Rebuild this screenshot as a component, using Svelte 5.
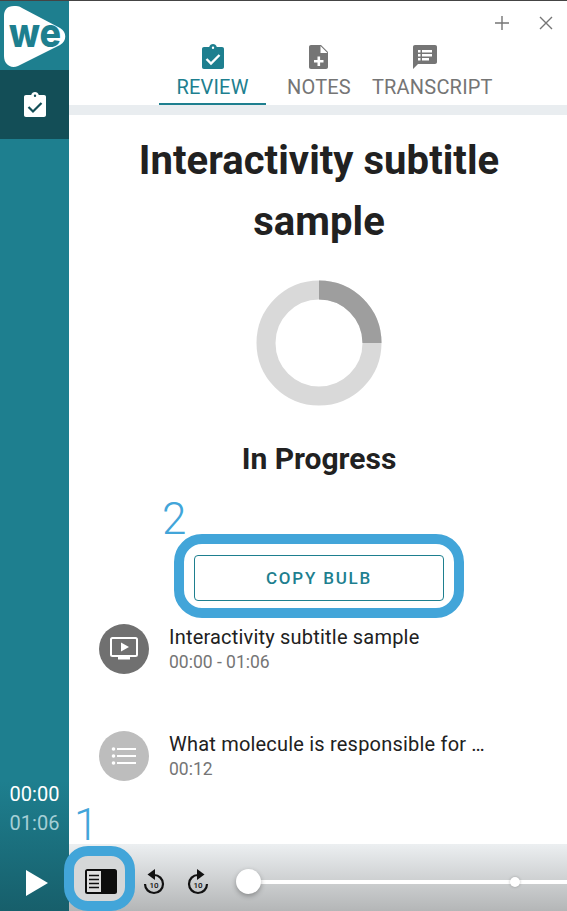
<script>
	const items = [
		{ title: 'Interactivity subtitle sample', time: '00:00 - 01:06', kind: 'video' },
		{ title: 'What molecule is responsible for …', time: '00:12', kind: 'lines' }
	];
</script>

<div class="app">
	<aside class="sidebar">
		<div class="logo">
			<svg width="69" height="69" viewBox="0 0 69 69">
				<path d="M14 5 C7 5 4 9 4 15 L4 55 C4 63 10 68 18 65 L60 44 C67 40 67 31 60 27 L22 7 C19 5 17 5 14 5Z" fill="#fff" />
				<text x="9" y="46" class="logo-text" textLength="52" lengthAdjust="spacingAndGlyphs">we</text>
			</svg>
		</div>
		<div class="active-item">
			<svg width="24" height="26" viewBox="0 0 24 26">
				<path fill="#fff" fill-rule="evenodd" d="M3 3h5.200C8.700 1.300 10.200 0 12 0s3.300 1.300 3.800 3H21c1.300 0 2 .8 2 2v18c0 1.300-.8 2-2 2H3c-1.300 0-2-.8-2-2V5c0-1.300.8-2 2-2zm9-.5a1.200 1.200 0 1 0 0 2.400 1.200 1.200 0 0 0 0-2.400z" />
				<path fill="none" stroke="#134e57" stroke-width="2.200" d="M5.500 15l4.500 4.500 8.500-8.500" />
			</svg>
		</div>
		<div class="spacer"></div>
		<div class="times">
			<span class="now">00:00</span>
			<span class="total">01:06</span>
		</div>
		<div class="play">
			<svg width="24" height="28" viewBox="0 0 24 28"><path d="M1 1l22 13L1 27z" fill="#fff" /></svg>
		</div>
	</aside>

	<div class="main">
		<div class="window-actions">
			<svg width="14" height="14" viewBox="0 0 14 14"><path d="M7 0v14M0 7h14" stroke="#757575" stroke-width="1.400" /></svg>
			<svg width="14" height="14" viewBox="0 0 14 14"><path d="M1 1l12 12M13 1L1 13" stroke="#757575" stroke-width="1.400" /></svg>
		</div>

		<nav class="tabs">
			<div class="tab active">
				<svg width="24" height="26" viewBox="0 0 24 26">
					<path fill="#1e7f8f" fill-rule="evenodd" d="M3 3h5.200C8.700 1.300 10.200 0 12 0s3.300 1.300 3.800 3H21c1.300 0 2 .8 2 2v18c0 1.300-.8 2-2 2H3c-1.300 0-2-.8-2-2V5c0-1.300.8-2 2-2zm9-.5a1.200 1.200 0 1 0 0 2.400 1.200 1.200 0 0 0 0-2.400z" />
					<path fill="none" stroke="#fff" stroke-width="2.400" d="M5.500 15l4.500 4.500 8.500-8.500" />
				</svg>
				<span>REVIEW</span>
			</div>
			<div class="tab">
				<svg width="24" height="26" viewBox="0 0 24 26">
					<path fill="#757575" d="M4 1h10l7 7v15c0 1.200-.8 2-2 2H4c-1.200 0-2-.8-2-2V3c0-1.200.8-2 2-2z" />
					<path fill="#fff" d="M13.500 2v7h7zM10.500 12.500h2.600v3.400h3.400v2.600h-3.400v3.400h-2.600v-3.400H7v-2.600h3.500z" />
				</svg>
				<span>NOTES</span>
			</div>
			<div class="tab">
				<svg class="transcript-icon" width="26" height="26" viewBox="0 0 26 26">
					<path fill="#757575" d="M3 1h20c1.300 0 2 .8 2 2v15c0 1.300-.8 2-2 2H6l-5 5V3c0-1.300.8-2 2-2z" />
					<path fill="#fff" d="M6 6h2.500v2.500H6zM10 6h10v2.500H10zM6 10h2.500v2.500H6zM10 10h10v2.500H10zM6 14h2.500v2.500H6zM10 14h7v2.500H10z" />
				</svg>
				<span>TRANSCRIPT</span>
			</div>
		</nav>
		<div class="divider"></div>

		<section class="content">
			<h1>Interactivity subtitle sample</h1>

			<svg class="donut" width="126" height="126" viewBox="0 0 126 126">
				<circle cx="63" cy="63" r="53" fill="none" stroke="#d9d9d9" stroke-width="19" />
				<path d="M63 10 A53 53 0 0 1 116 63" fill="none" stroke="#9e9e9e" stroke-width="19" />
			</svg>

			<h2>In Progress</h2>

			<button class="copy">COPY BULB</button>

			<ul class="list">
				{#each items as item}
					<li>
						<div class="bullet {item.kind}">
							{#if item.kind === 'video'}
								<svg width="30" height="26" viewBox="0 0 30 26">
									<rect x="2" y="2" width="26" height="18" rx="1.500" fill="none" stroke="#fff" stroke-width="2" />
									<path d="M12 6.500l8 4.500-8 4.500zM9 21h12v2.500H9z" fill="#fff" />
								</svg>
							{:else}
								<svg width="26" height="20" viewBox="0 0 26 20">
									<path d="M6 3h19M6 10h19M6 17h19" stroke="#fff" stroke-width="2" />
									<circle cx="2.500" cy="3" r="1.800" fill="#fff" />
									<circle cx="2.500" cy="10" r="1.800" fill="#fff" />
									<circle cx="2.500" cy="17" r="1.800" fill="#fff" />
								</svg>
							{/if}
						</div>
						<div class="info">
							<div class="item-title">{item.title}</div>
							<div class="item-time">{item.time}</div>
						</div>
					</li>
				{/each}
			</ul>
		</section>

		<footer class="controls">
			<div class="panel-btn">
				<svg width="32" height="25" viewBox="0 0 32 25">
					<rect width="32" height="25" rx="2.500" fill="#0d0d0d" />
					<rect x="2" y="2" width="14" height="21" fill="#ddd" />
					<path d="M4 6.500h10M4 10.500h10M4 14.500h10M4 18.500h10" stroke="#0d0d0d" stroke-width="1.600" />
				</svg>
			</div>
			<div class="skip">
				<svg width="22" height="26" viewBox="0 0 22 26">
					<path d="M11 6a9 9 0 1 1-9 9" fill="none" stroke="#111" stroke-width="2.200" />
					<path d="M12 0v11L4.500 5.500z" fill="#111" />
					<text x="11" y="19" class="skip-text">10</text>
				</svg>
				<svg width="22" height="26" viewBox="0 0 22 26">
					<path d="M11 6a9 9 0 1 0 9 9" fill="none" stroke="#111" stroke-width="2.200" />
					<path d="M10 0v11l7.500-5.500z" fill="#111" />
					<text x="11" y="19" class="skip-text">10</text>
				</svg>
			</div>
			<div class="track">
				<span class="thumb"></span>
				<span class="marker"></span>
			</div>
		</footer>

		<div class="ring ring-panel"></div>
		<span class="note note-one">1</span>
		<div class="ring ring-copy"></div>
		<span class="note note-two">2</span>
	</div>
</div>

<style>
	:global(body) {
		margin: 0;
		background: #fff;
	}

	.app {
		display: flex;
		width: 567px;
		height: 911px;
		box-sizing: border-box;
		border-top: 1px solid #444;
		overflow: hidden;
		font-family: Roboto, sans-serif;
		color: #212121;
	}

	.sidebar {
		display: flex;
		flex-direction: column;
		flex: 0 0 69px;
		background: linear-gradient(#1e7f8f 0, #1e7f8f 780px, #175f6b 910px);
	}

	.logo {
		height: 69px;
	}

	.logo svg {
		display: block;
	}

	.logo-text {
		font-family: Inter, sans-serif;
		font-weight: 800;
		font-size: 40px;
		fill: #1e7f8f;
	}

	.active-item {
		display: flex;
		align-items: center;
		justify-content: center;
		height: 69px;
		background: #134e57;
	}

	.spacer {
		flex: 1;
	}

	.times {
		display: flex;
		flex-direction: column;
		align-items: center;
		gap: 8px;
		margin-bottom: 20px;
		font-size: 20px;
		line-height: 21px;
	}

	.now {
		color: #fff;
	}

	.total {
		color: #a5cfd6;
	}

	.play {
		display: flex;
		align-items: center;
		justify-content: center;
		height: 57px;
		padding-left: 4px;
		box-sizing: border-box;
	}

	.main {
		position: relative;
		display: flex;
		flex-direction: column;
		flex: 1;
		min-width: 0;
	}

	.window-actions {
		display: flex;
		justify-content: flex-end;
		gap: 30px;
		height: 15px;
		padding: 15px 14px 0 0;
	}

	.tabs {
		display: flex;
		height: 74px;
		padding-left: 90px;
		gap: 21px;
	}

	.tab {
		display: flex;
		flex-direction: column;
		align-items: center;
		justify-content: flex-end;
		gap: 5px;
		box-sizing: border-box;
		height: 74px;
		color: #757575;
		font-size: 20px;
		line-height: 24px;
		letter-spacing: 0.2px;
		padding-bottom: 6px;
	}

	.tab.active {
		width: 107px;
		color: #1e7f8f;
		border-bottom: 2px solid #1e7f8f;
		padding-bottom: 4px;
	}

	.transcript-icon {
		margin-right: 14px;
	}

	.divider {
		flex: 0 0 10px;
		background: #e9edf0;
	}

	.content {
		display: flex;
		flex: 1;
		flex-direction: column;
		align-items: center;
		min-height: 0;
	}

	h1 {
		width: 400px;
		margin: 15px 0 0 2px;
		font-size: 40px;
		line-height: 61px;
		letter-spacing: 0.05px;
		font-weight: 700;
		text-align: center;
		color: #212121;
	}

	.donut {
		display: block;
		flex: none;
		margin: 28px 0 0 2px;
	}

	h2 {
		margin: 33px 0 0 2px;
		font-size: 30px;
		line-height: 40px;
		font-weight: 700;
	}

	.copy {
		flex: none;
		width: 250px;
		height: 46px;
		margin: 76px 0 0 2px;
		background: #fff;
		border: 1px solid #1e7f8f;
		border-radius: 4px;
		color: #1e7f8f;
		font-family: inherit;
		font-size: 17px;
		font-weight: 500;
		letter-spacing: 1.800px;
	}

	.list {
		align-self: stretch;
		margin: 23px 0 0;
		padding: 0 0 0 30px;
		list-style: none;
	}

	.list li {
		display: flex;
		gap: 20px;
		height: 107px;
	}

	.bullet {
		display: flex;
		flex: 0 0 50px;
		align-items: center;
		justify-content: center;
		height: 50px;
		border-radius: 50%;
	}

	.bullet.video {
		background: #707070;
	}

	.bullet.lines {
		background: #bdbdbd;
	}

	.info {
		padding-top: 1px;
	}

	.item-title {
		font-size: 20px;
		line-height: 24px;
		letter-spacing: 0.2px;
		color: #212121;
	}

	.item-time {
		margin-top: 1px;
		font-size: 17.500px;
		line-height: 24px;
		color: #757575;
	}

	.controls {
		display: flex;
		align-items: center;
		flex: 0 0 67px;
		background: linear-gradient(#eceff1, #b4b6b7);
	}

	.panel-btn {
		display: flex;
		align-items: center;
		justify-content: center;
		width: 56px;
		height: 56px;
		margin: 8px 0 0 4px;
		border-radius: 14px;
		background: #d5d7d8;
	}

	.skip {
		display: flex;
		gap: 22px;
		margin: 8px 0 0 14px;
	}

	.skip-text {
		font-family: Roboto, sans-serif;
		font-size: 8px;
		font-weight: 500;
		fill: #111;
		text-anchor: middle;
	}

	.track {
		position: relative;
		flex: 1;
		height: 4px;
		margin: 8px 0 0 39px;
		background: #fff;
	}

	.thumb {
		position: absolute;
		left: -12px;
		top: -11px;
		width: 25px;
		height: 25px;
		border-radius: 50%;
		background: #fff;
		box-shadow: 0 2px 5px rgba(0, 0, 0, 0.3);
	}

	.marker {
		position: absolute;
		left: 262px;
		top: -3px;
		width: 10px;
		height: 10px;
		border-radius: 50%;
		background: #fff;
		box-shadow: 0 0 3px rgba(0, 0, 0, 0.25);
	}

	.ring {
		position: absolute;
		box-sizing: border-box;
		border: 10px solid #42a5d9;
	}

	.ring-panel {
		left: -5px;
		top: 845px;
		width: 71px;
		height: 65px;
		border-radius: 24px;
	}

	.ring-copy {
		left: 105px;
		top: 533px;
		width: 290px;
		height: 84px;
		border-radius: 28px;
	}

	.note {
		position: absolute;
		color: #42a5d9;
		font-size: 44px;
		font-weight: 300;
		line-height: 44px;
	}

	.note-one {
		left: 5px;
		top: 802px;
	}

	.note-two {
		left: 93px;
		top: 496px;
	}
</style>
